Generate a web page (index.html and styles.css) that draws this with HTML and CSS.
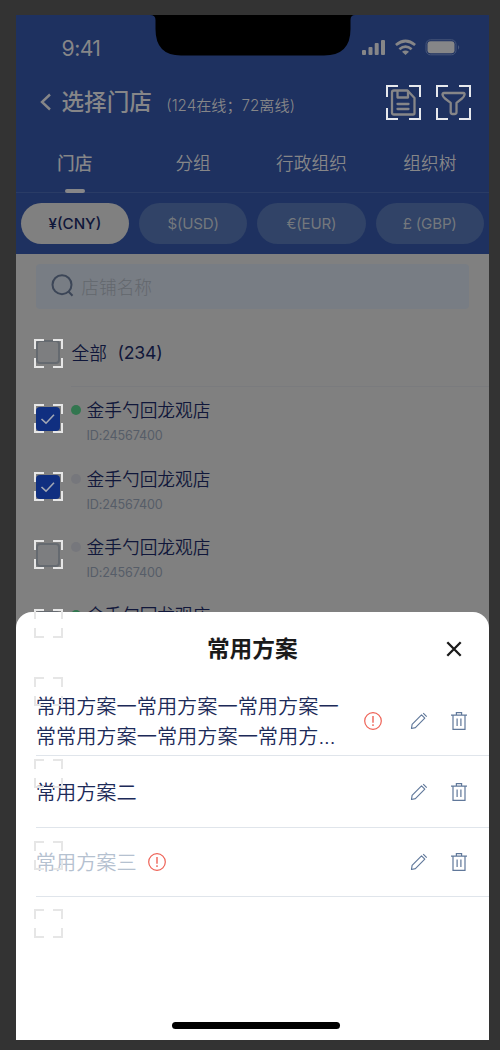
FILE: index.html
```html
<!DOCTYPE html>
<html lang="zh-CN">
<head>
<meta charset="utf-8">
<title>选择门店</title>
<link rel="stylesheet" href="styles.css">
</head>
<body>
<svg width="0" height="0" class="defs">
  <defs>
    <symbol id="corners" viewBox="0 0 29 29"><path d="M1 10V1H10M19 1H28V10M28 19V28H19M10 28H1V19" fill="none" stroke="currentColor" stroke-width="2"/></symbol>
    <symbol id="pencil" viewBox="0 0 18 18"><path d="M1.500 16.500 2.100 12.300 11.500 2.900 14.800 6.200 5.400 15.600ZM13.200 1.200 16.700 4.700" fill="none" stroke="currentColor" stroke-width="1.150" stroke-linejoin="round"/></symbol>
    <symbol id="trash" viewBox="0 0 18 20"><path d="M1 4.200H17M3 4.200V18.400H15V4.200M6.400 4V1.600H11.600V4M7.100 7.500V15M10.900 7.500V15" fill="none" stroke="currentColor" stroke-width="1.200"/></symbol>
    <symbol id="warn" viewBox="0 0 18 18"><circle cx="9" cy="9" r="8.300" fill="none" stroke="currentColor" stroke-width="1.200"/><path d="M9 4V10.700M9 12.300V14" fill="none" stroke="currentColor" stroke-width="1.400"/></symbol>
  </defs>
</svg>
<div class="phone">
  <header class="head">
    <div class="status">
      <span class="time">9:41</span>
      <svg class="notch" width="205" height="41" viewBox="0 0 205 41"><path d="M0 0H205Q200.500 0 200.500 5V14Q200.500 40.500 174 40.500H31Q5.500 40.500 5.500 14V5Q5.500 0 0 0Z"/></svg>
      <svg class="signals" width="100" height="18" viewBox="0 0 100 18">
        <g fill="#868688"><rect x="1" y="11" width="4" height="5" rx="1"/><rect x="7.500" y="8" width="4" height="8" rx="1"/><rect x="13.700" y="4" width="4" height="12" rx="1"/><rect x="20" y="1" width="4" height="15" rx="1"/>
        <path d="M44.500 16 48 12.800Q44.500 10.300 41 12.800Z"/></g>
        <path d="M34.900 6Q44.500-2 54.100 6M38.400 10.200Q44.500 5 50.600 10.200" fill="none" stroke="#868688" stroke-width="2.700"/>
        <rect x="65" y=".8" width="30" height="15" rx="4.500" fill="none" stroke="#46567a"/>
        <rect x="66.500" y="2.300" width="27" height="12" rx="3" fill="#868688"/>
        <path d="M97 6Q99.500 8.300 97 10.700Z" fill="#46567a"/>
      </svg>
    </div>
    <div class="titlebar">
      <svg class="back" width="12" height="18" viewBox="0 0 12 18"><path d="M10 1.500 2 9 10 16.500" fill="none" stroke="#868688" stroke-width="2.400"/></svg>
      <h1 class="title">选择门店</h1>
      <span class="online">(124在线；72离线)</span>
      <div class="tools">
        <span class="tool"><svg class="tool-mark" viewBox="0 0 35 35"><path d="M1 12V1H12M23 1H34V12M34 23V34H23M12 34H1V23" fill="none" stroke="#e6e8ed" stroke-width="2"/></svg>
          <svg width="35" height="35" viewBox="0 0 35 35"><path d="M8 5.500H21.500L28.500 13V28Q28.500 29.500 27 29.500H8Q6 29.500 6 27.500V7.500Q6 5.500 8 5.500ZM11.500 6V12.500H22V6M11.500 19H22.500M11.500 24H22.500" fill="none" stroke="#868688" stroke-width="2.300" stroke-linejoin="round" stroke-linecap="round"/></svg></span>
        <span class="tool"><svg class="tool-mark" viewBox="0 0 35 35"><path d="M1 12V1H12M23 1H34V12M34 23V34H23M12 34H1V23" fill="none" stroke="#e6e8ed" stroke-width="2"/></svg>
          <svg width="35" height="35" viewBox="0 0 35 35"><path d="M8 8H27.500Q29 8 28.500 9.800Q28 12 26 13.500L20.500 17.800V27Q20.500 29 18.500 29H16.500Q14.700 29 14.700 27V17.800L9 13.500Q7 12 6.500 9.800Q6.300 8 8 8Z" fill="none" stroke="#868688" stroke-width="2.300" stroke-linejoin="round"/></svg></span>
      </div>
    </div>
    <nav class="tabs">
      <span class="tab tab-on">门店</span><span class="tab">分组</span><span class="tab">行政组织</span><span class="tab">组织树</span>
    </nav>
    <div class="pills">
      <span class="pill pill-on">¥(CNY)</span><span class="pill">$(USD)</span><span class="pill">€(EUR)</span><span class="pill">£ (GBP)</span>
    </div>
  </header>
  <div class="search">
    <svg width="24" height="24" viewBox="0 0 24 24"><circle cx="11" cy="10.700" r="9.500" fill="none" stroke="#3c4657" stroke-width="2"/><path d="M17.500 17.500 21.500 21.700" stroke="#3c4657" stroke-width="2"/></svg>
    <span class="search-text">店铺名称</span>
  </div>
  <div class="all"><span class="box"></span><span class="all-text">全部</span><span class="all-count">(234)</span></div>
  <ul class="stores">
    <li class="store"><span class="box box-on"><svg width="24" height="24" viewBox="0 0 24 24"><path d="M5.500 12 10 16.200 18 7.800" fill="none" stroke="#a3a8b3" stroke-width="1.600"/></svg></span><i class="dot dot-on"></i><div class="info"><span class="name">金手勺回龙观店</span><span class="sid">ID:24567400</span></div></li>
    <li class="store"><span class="box box-on"><svg width="24" height="24" viewBox="0 0 24 24"><path d="M5.500 12 10 16.200 18 7.800" fill="none" stroke="#a3a8b3" stroke-width="1.600"/></svg></span><i class="dot"></i><div class="info"><span class="name">金手勺回龙观店</span><span class="sid">ID:24567400</span></div></li>
    <li class="store"><span class="box"></span><i class="dot"></i><div class="info"><span class="name">金手勺回龙观店</span><span class="sid">ID:24567400</span></div></li>
    <li class="store"><span class="box"></span><i class="dot dot-on"></i><div class="info"><span class="name">金手勺回龙观店</span></div></li>
  </ul>
  <section class="sheet">
    <div class="sheet-head">
      <h2 class="sheet-title">常用方案</h2>
      <svg class="close" width="16" height="16" viewBox="0 0 16 16"><path d="M1.300 1.300 14.700 14.700M14.700 1.300 1.300 14.700" stroke="#1a1a1a" stroke-width="2.300"/></svg>
    </div>
    <div class="plan plan-first">
      <span class="plan-name">常用方案一常用方案一常用方案一<br>常常用方案一常用方案一常用方...</span>
      <svg class="warn" width="18" height="18"><use href="#warn"/></svg>
      <span class="acts"><svg width="18" height="18"><use href="#pencil"/></svg><svg width="18" height="20"><use href="#trash"/></svg></span>
    </div>
    <div class="plan plan-second">
      <span class="plan-name">常用方案二</span>
      <span class="acts"><svg width="18" height="18"><use href="#pencil"/></svg><svg width="18" height="20"><use href="#trash"/></svg></span>
    </div>
    <div class="plan plan-third">
      <span class="plan-name plan-off">常用方案三</span>
      <svg class="warn warn-near" width="18" height="18"><use href="#warn"/></svg>
      <span class="acts"><svg width="18" height="18"><use href="#pencil"/></svg><svg width="18" height="20"><use href="#trash"/></svg></span>
    </div>
    <div class="homebar"></div>
  </section>
  <svg class="mark m1"><use href="#corners"/></svg>
  <svg class="mark m2"><use href="#corners"/></svg>
  <svg class="mark m3"><use href="#corners"/></svg>
  <svg class="mark m4"><use href="#corners"/></svg>
  <svg class="mark m5"><use href="#corners"/></svg>
  <svg class="mark m6"><use href="#corners"/></svg>
  <svg class="mark m7"><use href="#corners"/></svg>
  <svg class="mark m8"><use href="#corners"/></svg>
  <svg class="mark m9"><use href="#corners"/></svg>
</div>
</body>
</html>
```
FILE: styles.css
```css
* { box-sizing: border-box; }
body {
  margin: 0;
  height: 1050px;
  overflow: hidden;
  padding: 15px 11px 10px 15.6px;
  background: #333;
  font-family: Inter, "Noto Sans CJK SC", sans-serif;
}
.defs { position: absolute; }
svg { display: block; flex: none; }
h1, h2, ul { margin: 0; padding: 0; list-style: none; }
.phone { position: relative; height: 1025px; overflow: hidden; background: #808080; }

.head { height: 238.500px; background: #1e3160; color: #868688; }
.status { position: relative; height: 62px; display: flex; justify-content: space-between; padding: 21px 28px 0 46px; }
.time { font-size: 21.200px; line-height: 24px; letter-spacing: -0.600px; }
.notch { position: absolute; left: 134.400px; top: 0; }
.signals { margin-top: 3px; }
.titlebar { height: 50px; display: flex; align-items: center; padding: 0 17.900px 0 24.400px; }
.title { margin-left: 9.500px; font-size: 22.600px; font-weight: 500; line-height: 32px; }
.online { margin: 7px 0 0 14.500px; font-size: 15.150px; line-height: 20px; font-weight: 350; white-space: nowrap; letter-spacing: 0; }
.tools { margin-left: auto; display: flex; gap: 15.200px; }
.tool { position: relative; width: 35px; height: 35px; }
.tool-mark { position: absolute; left: 0; top: 0; width: 35px; height: 35px; }
.tabs { height: 66px; display: grid; grid-template-columns: repeat(4, 1fr); border-bottom: 1px solid #2a3c66; }
.tab { display: flex; flex-direction: column; align-items: center; font-size: 17.700px; font-weight: 350; line-height: 26px; padding-top: 24px; }
.tab-on { font-weight: 500; }
.tab-on::after { content: ""; width: 20px; height: 4px; border-radius: 2px; background: #868688; margin-top: 12px; }
.pills { display: grid; grid-template-columns: repeat(4, 1fr); gap: 10px; padding: 10.300px 5.200px; }
.pill { height: 40.500px; border-radius: 21px; background: #314367; display: flex; align-items: center; justify-content: center; font-size: 15.150px; font-weight: 400; letter-spacing: -0.200px; color: #74787d; }
.pill-on { background: #808080; color: #10173a; font-weight: 500; letter-spacing: 0; }

.search { height: 44.500px; margin: 10.700px 20.200px 0; border-radius: 4px; background: #787d84; display: flex; align-items: center; padding-left: 15.500px; }
.search-text { margin-left: 6px; font-size: 17.700px; font-weight: 300; color: #63676d; }
.all { height: 77.400px; display: flex; align-items: center; padding: 10px 0 0 20.700px; }
.box { width: 24px; height: 24px; border-radius: 4px; border: 2px solid #656a70; background: #7d7e80; flex: none; }
.box-on { border: 0; background: #102f80; }
.all-text { margin-left: 11.300px; font-size: 17.700px; font-weight: 350; color: #10173a; }
.all-count { margin-left: 10.500px; font-size: 17.700px; letter-spacing: -0.200px; color: #10173a; }
.stores { position: relative; }
.stores::before { content: ""; display: block; height: 1px; margin-left: 55px; background: #7a7b7e; margin-bottom: 10.300px; }
.store { display: flex; height: 68.200px; padding-left: 20.700px; }
.store .box { margin-top: 9.500px; }
.dot { width: 10px; height: 10px; border-radius: 50%; background: #76777c; margin: 8px 5.500px 0 10.800px; }
.dot-on { background: #32764f; }
.info { display: flex; flex-direction: column; }
.name { font-size: 17.700px; line-height: 26px; font-weight: 350; color: #10173a; padding-top: 1px; }
.sid { font-size: 12.600px; line-height: 18px; margin-top: 3px; font-weight: 400; letter-spacing: -0.150px; color: #565d68; }

.sheet { position: absolute; inset: 597px 0 0 0; background: #fff; border-radius: 16px 16px 0 0; }
.sheet-head { position: relative; height: 72px; display: flex; justify-content: center; align-items: center; padding-top: 2px; }
.sheet-title { font-size: 22.700px; line-height: 32px; font-weight: 700; color: #1a1a1a; }
.close { position: absolute; right: 27.500px; top: 28.600px; }
.plan { margin-left: 20.200px; border-bottom: 1px solid #e0e5eb; display: flex; align-items: center; padding-right: 21.400px; color: #60789a; }
.plan-first { height: 72px; padding-top: 2px; }
.plan-second { height: 72px; }
.plan-third { height: 69px; }
.plan-name { padding-top: 3px; font-size: 20.200px; line-height: 30.300px; font-weight: 350; color: #1c2a58; white-space: nowrap; }
.plan-off { color: #b5c1d0; }
.warn { color: #ee6256; }
.plan-first .warn { margin-left: auto; margin-right: 28px; }
.plan-first .acts { margin-left: 0; }
.warn-near { margin-left: 11px; }
.acts { margin-left: auto; display: flex; align-items: center; gap: 22px; }
.homebar { position: absolute; left: 156.400px; bottom: 11.500px; width: 168px; height: 6.500px; border-radius: 4px; background: #000; }

.mark { position: absolute; left: 18.400px; width: 29px; height: 29px; color: #e6e6e6; }
.m1 { top: 324px; }
.m2 { top: 389px; }
.m3 { top: 457px; }
.m4 { top: 525px; }
.m5 { top: 594px; }
.m6 { top: 662px; }
.m7 { top: 744px; }
.m8 { top: 826px; }
.m9 { top: 894px; }
```
